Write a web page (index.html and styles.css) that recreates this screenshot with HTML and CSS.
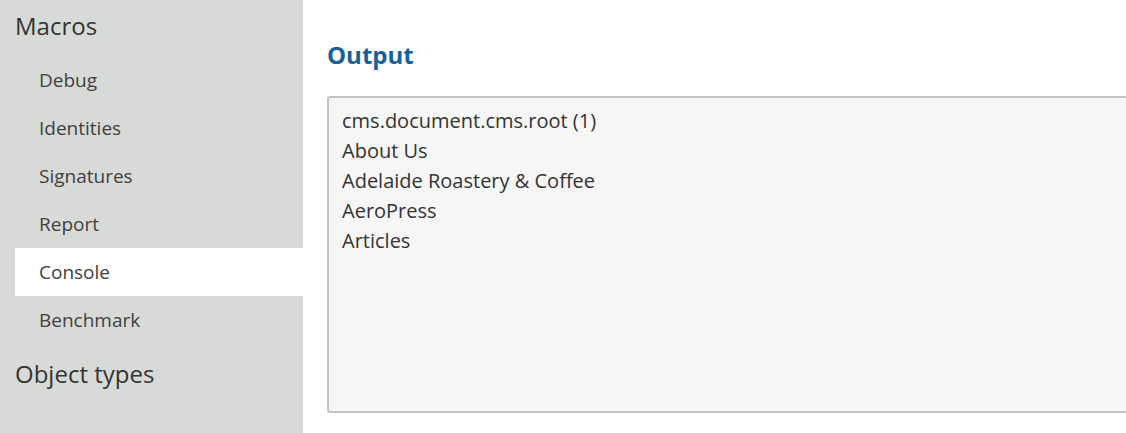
FILE: index.html
```html
<!DOCTYPE html>
<html>
<head>
<meta charset="utf-8">
<link rel="stylesheet" href="styles.css">
</head>
<body>
<div class="page">
  <nav class="sidebar">
    <div class="group-title">Macros</div>
    <ul class="menu">
      <li class="item">Debug</li>
      <li class="item">Identities</li>
      <li class="item">Signatures</li>
      <li class="item">Report</li>
      <li class="item active">Console</li>
      <li class="item">Benchmark</li>
    </ul>
    <div class="group-title group-title-next">Object types</div>
  </nav>
  <main class="main">
    <h2 class="title">Output</h2>
    <div class="output">
      <div>cms.document.cms.root (1)</div>
      <div>About Us</div>
      <div>Adelaide Roastery &amp; Coffee</div>
      <div>AeroPress</div>
      <div>Articles</div>
    </div>
  </main>
</div>
</body>
</html>
```

FILE: styles.css
```css
html, body {
  margin: 0;
  padding: 0;
  height: 100%;
  overflow: hidden;
  background: #ffffff;
}
body {
  font-family: "Open Sans", "Noto Sans", sans-serif;
  color: #333333;
}
.page {
  display: flex;
  height: 433px;
}
.sidebar {
  width: 303px;
  flex: 0 0 303px;
  background: #d8dad8;
  padding-left: 15px;
  box-sizing: border-box;
}
.group-title {
  font-size: 24px;
  height: 56px;
  line-height: 52px;
  color: #333;
}
.group-title-next {
  line-height: 60px;
}
.menu {
  list-style: none;
  margin: 0;
  padding: 0;
}
.item {
  height: 48px;
  line-height: 48px;
  padding-left: 24px;
  font-size: 19px;
  color: #404040;
}
.item.active {
  background: #ffffff;
}
.main {
  flex: 1;
  padding-left: 24px;
  min-width: 0;
}
.title {
  margin: 0 0 23px 0;
  padding-top: 37px;
  font-size: 24px;
  line-height: 36px;
  font-weight: 700;
  color: #17609a;
}
.output {
  width: 100%;
  height: 317px;
  box-sizing: border-box;
  border: 2px solid #c2c2c2;
  border-right: none;
  border-radius: 3px 0 0 3px;
  background: #f6f6f6;
  padding: 8px 13px;
  font-size: 20px;
  line-height: 30px;
  color: #333;
}
```
